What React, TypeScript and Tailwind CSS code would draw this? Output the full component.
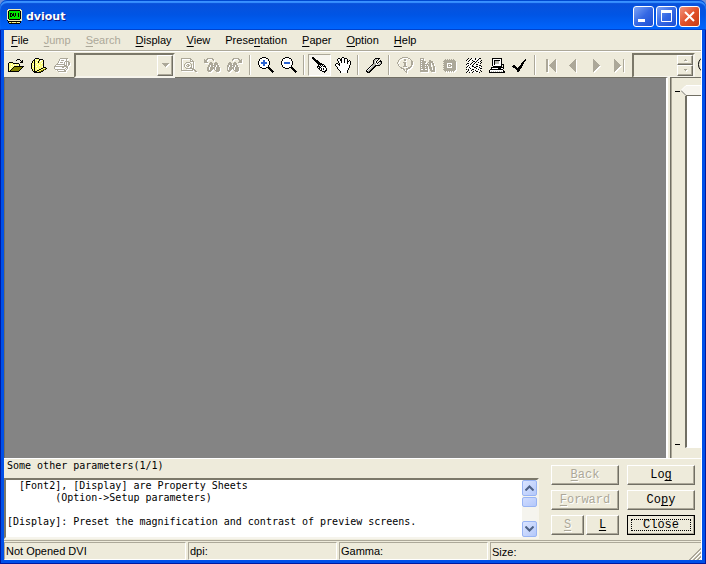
import { clsx } from 'clsx'
import type { ReactNode } from 'react'

const COLORS: Record<string, string> = {
  k: '#000000',
  w: '#ffffff',
  g: '#aca899',
  y: '#ffff7b',
  o: '#848200',
  b: '#2a62d0',
  s: '#b5b5ad',
  c: '#f0ecb4',
  n: '#00e300',
}

// each string is one row of pixels, each letter a key of COLORS
const ICONS = {
  app: [
    '.ccccccccccccc.',
    'cckkkkkkkkkkkcc',
    'cknnnnnnnnnnnkc',
    'cknnnnnnnnnnnkc',
    'cknkknknknnknkc',
    'cknknkknknnknkc',
    'cknknkknknnknkc',
    'cknkknnknnnknkc',
    'cknnnnnnnnnnnkc',
    'cknnnnnnnnnnnkc',
    'cckkkkkkkkkkkcc',
    'kcccccccccccccc',
    '.kkkkkkkkkkkkk.',
    '.kcyocycyocyck.',
    '..kkkkkkkkkkk..',
  ],
  open: [
    '.........kkk....',
    '........k...k.k.',
    '.............kk.',
    '.kkkk.......kkk.',
    'kyyyykkkkkk.....',
    'kyywyyywyyyk....',
    'kyyyywyyyywk....',
    'kyywyykkkkkkkkkk',
    'kyyyykooooooook.',
    'kywykooooooook..',
    'kyykooooooook...',
    'kykooooooook....',
    'kkkkkkkkkkk.....',
  ],
  files: [
    '....kkkk........',
    '...kwyyykkkk....',
    '..kkyywykwwyk...',
    '.kykyyykywyyk...',
    '.kykywykyyywk...',
    'kyykyyyyyywyk...',
    'kywkyywyyyyyk...',
    'kyykyyyywyyyk...',
    'kywkywyyyyywk...',
    'kyykyyyyyyyykkk.',
    'kyykyywyyykkyyok',
    '.kykyyyykkyyook.',
    '.kykyykkyyook...',
    '..kkkkyyookk....',
    '...kkkkkkk......',
  ],
  print: [
    '......gggggggg..',
    '.....gwwwwwwg...',
    '.....gwgggwwg...',
    '....gwwwwwwgggg.',
    '....gwgggwgwgwgg',
    '...gwwwwwwgwgwgg',
    '..gggggggggwgwgg',
    '.gwwwwwwwwgggwg.',
    'gggggggggggggg..',
    'gwwwwwwwggwwgg..',
    'gwwwwwwwwwwgwg..',
    '.ggggggggggwg...',
    '...gwwwwwwgg....',
    '....gggggggg....',
  ],
  preview: [
    'gggggggggg......',
    'g........gg.....',
    'g........g.g....',
    'g........gggg...',
    'g....gggg...g...',
    'g...g....g..g...',
    'g..g..gg..g.g...',
    'g..g.g.gg.g.g...',
    'g..g..gg..g.g...',
    'g...g....gg.g...',
    'g....gggggggg...',
    'g..........ggg..',
    'gggggggggggg.gg.',
    '..............gg',
  ],
  findBack: [
    '...gggggg.......',
    'g.gg....gg......',
    'ggg......g......',
    'ggg.............',
    'gggg..gg...gg...',
    '.....gggg.gggg..',
    '.....gggg.gggg..',
    '....ggwgggggwgg.',
    '....ggwggwggwgg.',
    '...ggwgggggwgggg',
    '...ggwgggggwgggg',
    '...ggwggg.gwgggg',
    '...ggggg...ggggg',
    '....ggg.....ggg.',
  ],
  findNext: [
    '......gggggg....',
    '.....gg....gg.g.',
    '.....g......ggg.',
    '............ggg.',
    '..gg...gg..gggg.',
    '.gggg.gggg......',
    '.gggg.gggg......',
    'ggwgggggwgg.....',
    'ggwggwggwgg.....',
    'gwgggggwgggg....',
    'gwgggggwgggg....',
    'gwggg.gwgggg....',
    'gggg...ggggg....',
    '.gg.....ggg.....',
  ],
  zoomIn: [
    '....kkkk........',
    '..kkwwwwkk......',
    '.kwwwwwwwwk.....',
    '.kwwwbbwwwk.....',
    'kwwwwbbwwwwk....',
    'kwwbbbbbbwwk....',
    'kwwbbbbbbwwk....',
    'kwwwwbbwwwwk....',
    '.kwwwbbwwwk.....',
    '.kwwwwwwwwk.....',
    '..kkwwwwkkkk....',
    '....kkkk..kkk...',
    '...........kkk..',
    '............kkk.',
    '.............kkk',
    '..............k.',
  ],
  zoomOut: [
    '....kkkk........',
    '..kkwwwwkk......',
    '.kwwwwwwwwk.....',
    '.kwwwwwwwwk.....',
    'kwwwwwwwwwwk....',
    'kwwbbbbbbwwk....',
    'kwwbbbbbbwwk....',
    'kwwwwwwwwwwk....',
    '.kwwwwwwwwk.....',
    '.kwwwwwwwwk.....',
    '..kkwwwwkkkk....',
    '....kkkk..kkk...',
    '...........kkk..',
    '............kkk.',
    '.............kkk',
    '..............k.',
  ],
  pointer: [
    'kk..............',
    'kkk.............',
    '.kkk............',
    '..kkkk..........',
    '...kkkk.........',
    '....kkkk........',
    '.....kkkkk......',
    '......kkkkkk....',
    '......kwkwkwk...',
    '.....kkkwkwkkk..',
    '.....kwkkwwwwk..',
    '......kkwkwkwwk.',
    '.......kwkwkwwk.',
    '........kkwwwkk.',
    '..........kkkk..',
    '............k...',
  ],
  hand: [
    '.......kk.......',
    '...kk.kwwkkk....',
    '..kwwkkwwkwwk...',
    '..kwwkkwwkwwk.k.',
    '...kwwkwwkwwkkwk',
    '...kwwkwwkwwkwwk',
    '.kk.kwwwwwwwkwwk',
    'kwwkkwwwwwwwwwwk',
    'kwwwkwwwwwwwwwk.',
    '.kwwwwwwwwwwwwk.',
    '..kwwwwwwwwwwwk.',
    '..kwwwwwwwwwwk..',
    '...kwwwwwwwwwk..',
    '....kwwwwwwwk...',
    '.....kwwwwwwk...',
    '.....kwwwwwwk...',
  ],
  wrench: [
    '.........kkkkk..',
    '........ksswk...',
    '.......ksswk..k.',
    '.......kswk..kkk',
    '.......kswk.kwsk',
    '.......ksswkwssk',
    '......kssswwssk.',
    '.....kssskkkkk..',
    '....kwsskk......',
    '...kwsskk.......',
    '..kwsskk........',
    '.kwsskk.........',
    'kwsskk..........',
    'kkskk...........',
    '.kkk............',
  ],
  info: [
    '.....gggggg.....',
    '...gg......gg...',
    '..g....gg....g..',
    '.g.....gg.....g.',
    '.g............gg',
    'g.....ggg.....gg',
    'g......gg.....gg',
    '.g.....gg.....gg',
    '.g.....gg.....g.',
    '..g...gggg...gg.',
    '...gg......ggg..',
    '....ggg..gggg...',
    '......gg.gg.....',
    '.......g.g......',
    '........gg......',
    '.........g......',
  ],
  fonts: [
    'gggg............',
    'gwwg............',
    'gggg.....gg.....',
    'g.gggg...gggg...',
    'gggggg..ggggg...',
    'g.ggg..g.gg.gg..',
    'ggggggggggg.gg..',
    'g.gggwg.ggg..g..',
    'gggggggg.gg..gg.',
    'g.gggwgg.ggg.gg.',
    'gggggggg.ggg.gg.',
    'gwwggwwg..gg.gg.',
    'gggggggg..ggggg.',
    'gggggggg...gggg.',
  ],
  chip: [
    '..g.g.g.g.g....',
    '.ggggggggggg...',
    'ggggggggggggg..',
    '.gggggggggggg..',
    'ggggwwwwwgggg..',
    '.gggwgggwgggg..',
    'ggggwgwgggggg..',
    '.gggwgggwgggg..',
    'ggggwwwwwgggg..',
    '.gggggggggggg..',
    'ggggggggggggg..',
    '.ggggggggggg...',
    '..g.g.g.g.g....',
  ],
  hatch: [
    '..k..kw.wk.wwkk.',
    '.kw.k.ww.kwwkw..',
    'kw.kwwk.wwwk.w.k',
    '.wkww.wkkwkwwwk.',
    '..w.w.kwwk..kw.k',
    '.kkw.kw.kw.ww.k.',
    'kwwwkwwkwwkkww..',
    '.wkwwwk.ww..wkk.',
    '.kw.w.kkw.kkw.wk',
    'kwwkwwwwkkwwwkw.',
    '.w.wkw.w.wkw.wkk',
    'k.kww.kkw.wwkw.w',
    'w.kwwkw.wkw.wwk.',
    '.kw.ww.kwwkkw..k',
    'kw.kw.kw.w.wwk..',
  ],
  computer: [
    '...kkkkkkkkkk...',
    '...kwwwwwwwwk...',
    '...kwkkkkkkwk...',
    '...kwksssswwk...',
    '...kwksssswwk...',
    '...kwksssswwk...',
    '...kwkwwwwwwkkk.',
    '...kwwwwwwwwk.k.',
    '....kkkkkkkkk.k.',
    '..kkkkkkkkkkkkk.',
    '..kwwwwwwkkkwwk.',
    '.kkkkkkkkkkkkk..',
    'kwwwwwwwwwwwwwk.',
    'kwswswswswswswkk',
    'kkkkkkkkkkkkkkkk',
  ],
  check: [
    '.............k..',
    '............kk..',
    '...........kk...',
    '..........kk....',
    '.........kkk....',
    '.........kk.....',
    '.kk.....kkk.....',
    'kkkk...kkk......',
    '.kkkk.kkkk......',
    '...kkkkkk.......',
    '....kkkk........',
    '.....kkk........',
    '.....kk.........',
  ],
  first: [
    '.gg.......g.',
    '.gg......gg.',
    '.gg.....ggg.',
    '.gg....gggg.',
    '.gg...ggggg.',
    '.gg..gggggg.',
    '.gg.ggggggg.',
    '.gg..gggggg.',
    '.gg...ggggg.',
    '.gg....gggg.',
    '.gg.....ggg.',
    '.gg......gg.',
    '.gg.......g.',
  ],
  prev: [
    '......g...',
    '.....gg...',
    '....ggg...',
    '...gggg...',
    '..ggggg...',
    '.gggggg...',
    'ggggggg...',
    '.gggggg...',
    '..ggggg...',
    '...gggg...',
    '....ggg...',
    '.....gg...',
    '......g...',
  ],
  next: [
    'g.......',
    'gg......',
    'ggg.....',
    'gggg....',
    'ggggg...',
    'gggggg..',
    'ggggggg.',
    'gggggg..',
    'ggggg...',
    'gggg....',
    'ggg.....',
    'gg......',
    'g.......',
  ],
  last: [
    'g........g..',
    'gg.......g..',
    'ggg......g..',
    'gggg.....g..',
    'ggggg....g..',
    'gggggg...g..',
    'ggggggg..g..',
    'gggggg...g..',
    'ggggg....g..',
    'gggg.....g..',
    'ggg......g..',
    'gg.......g..',
    'g........g..',
  ],
  up: ['..g..', '.ggg.'],
  down: ['.ggg.', '..g..'],
  drop: ['ggggggg', '.ggggg.', '..ggg..', '...g...'],
  grip: [
    '...........g',
    '..........gg',
    '.........ggw',
    '........ggw.',
    '.......ggw.g',
    '......ggw.gg',
    '.....ggw.ggw',
    '....ggw.ggw.',
    '...ggw.ggw.g',
    '..ggw.ggw.gg',
    '.ggw.ggw.ggw',
    'ggw.ggw.ggw.',
  ],
}

type IconName = keyof typeof ICONS

interface ToolItem {
  icon: IconName
  label: string
  disabled?: boolean
  pressed?: boolean
}

const MENUS = [
  { label: 'File', key: 0 },
  { label: 'Jump', key: 0, disabled: true },
  { label: 'Search', key: 0, disabled: true },
  { label: 'Display', key: 0 },
  { label: 'View', key: 0 },
  { label: 'Presentation', key: 5 },
  { label: 'Paper', key: 0 },
  { label: 'Option', key: 0 },
  { label: 'Help', key: 0 },
]

const FILE_TOOLS: ToolItem[] = [
  { icon: 'open', label: 'Open' },
  { icon: 'files', label: 'Open files' },
  { icon: 'print', label: 'Print', disabled: true },
]

const TOOL_GROUPS: ToolItem[][] = [
  [
    { icon: 'preview', label: 'Find', disabled: true },
    { icon: 'findBack', label: 'Find previous', disabled: true },
    { icon: 'findNext', label: 'Find next', disabled: true },
  ],
  [
    { icon: 'zoomIn', label: 'Zoom in' },
    { icon: 'zoomOut', label: 'Zoom out' },
  ],
  [
    { icon: 'pointer', label: 'Pointer', pressed: true },
    { icon: 'hand', label: 'Hand' },
  ],
  [{ icon: 'wrench', label: 'Setup' }],
  [
    { icon: 'info', label: 'Information', disabled: true },
    { icon: 'fonts', label: 'Fonts', disabled: true },
    { icon: 'chip', label: 'Memory', disabled: true },
    { icon: 'hatch', label: 'Graphics' },
    { icon: 'computer', label: 'Screen' },
    { icon: 'check', label: 'Check' },
  ],
  [
    { icon: 'first', label: 'First page', disabled: true },
    { icon: 'prev', label: 'Previous page', disabled: true },
    { icon: 'next', label: 'Next page', disabled: true },
    { icon: 'last', label: 'Last page', disabled: true },
  ],
]

const HELP_TEXT = `  [Font2], [Display] are Property Sheets
        (Option->Setup parameters)

[Display]: Preset the magnification and contrast of preview screens.`

const RAISED = 'border border-t-white border-l-white border-r-[#716f64] border-b-[#716f64] shadow-[inset_-1px_-1px_0_#aca899]'
const SUNKEN = 'border-2 border-t-[#7b7869] border-l-[#7b7869] border-r-[#f6f4ec] border-b-[#f6f4ec]'

function PixelIcon({ name, embossed }: { name: IconName; embossed?: boolean }) {
  const rows = ICONS[name]
  const width = rows[0].length
  const pixels = rows.flatMap((row, y) => [...row].map((c, x) => ({ c, x, y }))).filter((p) => p.c !== '.')

  return (
    <svg width={width} height={rows.length} shapeRendering="crispEdges" className="shrink-0 overflow-visible" aria-hidden="true">
      {embossed && pixels.map((p) => <rect key={`s${p.x}-${p.y}`} x={p.x + 1} y={p.y + 1} width="1" height="1" fill="#ffffff" />)}
      {pixels.map((p) => (
        <rect key={`${p.x}-${p.y}`} x={p.x} y={p.y} width="1" height="1" fill={COLORS[p.c]} />
      ))}
    </svg>
  )
}

function Mnemonic({ text, index }: { text: string; index: number }) {
  return (
    <span>
      {text.slice(0, index)}
      <span className="underline underline-offset-2">{text[index]}</span>
      {text.slice(index + 1)}
    </span>
  )
}

function Separator() {
  return <div className="mx-[3px] h-5 w-[2px] shrink-0 border-r border-l border-r-white border-l-[#aca899]" />
}

function ToolButton({ icon, label, disabled, pressed }: ToolItem) {
  return (
    <button
      type="button"
      aria-label={label}
      aria-pressed={pressed}
      disabled={disabled}
      className={clsx(
        'flex h-[22px] w-[23px] shrink-0 items-center justify-center',
        pressed && 'border border-t-[#aca899] border-r-white border-b-white border-l-[#aca899] bg-[#f7f5ee]'
      )}
    >
      <PixelIcon name={icon} embossed={disabled} />
    </button>
  )
}

function CaptionButton({ label, close, children }: { label: string; close?: boolean; children: ReactNode }) {
  return (
    <button
      type="button"
      aria-label={label}
      className={clsx(
        'flex size-[21px] items-center justify-center rounded-[3px] border border-white bg-linear-to-br',
        close ? 'from-[#f0917a] via-[#e2512a] to-[#c83c14]' : 'from-[#7da2f5] via-[#3568e4] to-[#1c4fd4]'
      )}
    >
      <svg width="15" height="15" fill="none" stroke="#ffffff" aria-hidden="true">
        {children}
      </svg>
    </button>
  )
}

function PanelButton({ label, index, disabled, focused }: { label: string; index?: number; disabled?: boolean; focused?: boolean }) {
  return (
    <button
      type="button"
      disabled={disabled}
      className={clsx(
        "relative h-5 flex-1 text-center font-['Liberation_Mono'] text-[12px] leading-4",
        RAISED,
        disabled && 'text-[#aca899] [text-shadow:1px_1px_0_#fff]',
        focused && 'outline outline-black -outline-offset-1'
      )}
    >
      {index === undefined ? label : <Mnemonic text={label} index={index} />}
      {focused && <span className="absolute inset-[3px] border border-dotted border-black" />}
    </button>
  )
}

function TitleBar() {
  return (
    <header className="flex h-[30px] items-center rounded-t-[7px] bg-linear-to-b from-[#0a4fd8] via-[#0055e5] to-[#0066ff] px-[6px] shadow-[inset_0_1px_0_#0048d0,inset_0_3px_1px_#3a92ff,inset_0_-1px_0_#0043cf]">
      <div className="flex flex-1 items-center gap-1 pt-[3px] pl-px">
        <PixelIcon name="app" />
        <h1 className="font-['DejaVu_Sans'] text-[11px] leading-4 font-bold text-white [text-shadow:1px_1px_0_#0a1883]">dviout</h1>
      </div>
      <div className="mt-[3px] flex gap-[2px]">
        <CaptionButton label="Minimize">
          <path d="M2 11.5h7" strokeWidth="3" />
        </CaptionButton>
        <CaptionButton label="Maximize">
          <path d="M2.5 2v10.5h10V2M2 3h11" />
          <path d="M2 2.5h11" strokeWidth="3" />
        </CaptionButton>
        <CaptionButton label="Close window" close>
          <path d="M3 3l9 9M12 3l-9 9" strokeWidth="2" />
        </CaptionButton>
      </div>
    </header>
  )
}

function MenuBar() {
  return (
    <nav className="flex h-5 items-center gap-[15px] pl-[7px]">
      {MENUS.map((menu) => (
        <button key={menu.label} type="button" disabled={menu.disabled} className={clsx('leading-4', menu.disabled && 'text-[#aca899]')}>
          <Mnemonic text={menu.label} index={menu.key} />
        </button>
      ))}
    </nav>
  )
}

function Toolbar() {
  return (
    <div className="flex h-[27px] items-center overflow-hidden border-t border-t-white shadow-[0_-1px_0_#aca899]">
      {FILE_TOOLS.map((tool) => (
        <ToolButton key={tool.icon} {...tool} />
      ))}
      <div className={clsx('relative mr-[2px] ml-px h-[25px] w-[101px] shrink-0', SUNKEN)}>
        <select aria-label="Search text" disabled className="size-full appearance-none" />
        <span className={clsx('pointer-events-none absolute inset-y-0 right-0 flex w-4 items-center justify-center bg-[#eeebdb]', RAISED)}>
          <PixelIcon name="drop" embossed />
        </span>
      </div>
      {TOOL_GROUPS.map((group, i) => (
        <div key={i} className="flex shrink-0 items-center">
          {i > 0 && <Separator />}
          {group.map((tool) => (
            <ToolButton key={tool.icon} {...tool} />
          ))}
        </div>
      ))}
      <div className={clsx('ml-px flex h-[25px] w-[63px] shrink-0', SUNKEN)}>
        <input aria-label="Page" disabled className="w-0 flex-1" />
        <div className="flex w-4 flex-col">
          <button type="button" aria-label="Page up" disabled className={clsx('flex flex-1 items-center justify-center', RAISED)}>
            <PixelIcon name="up" embossed />
          </button>
          <button type="button" aria-label="Page down" disabled className={clsx('flex flex-1 items-center justify-center', RAISED)}>
            <PixelIcon name="down" embossed />
          </button>
        </div>
      </div>
      <svg width="14" height="16" fill="none" stroke="#000000" className="ml-[3px] shrink-0" aria-hidden="true">
        <ellipse cx="6" cy="7.5" rx="5.5" ry="7" />
      </svg>
    </div>
  )
}

function PageSlider() {
  return (
    <aside className="relative ml-[2px] flex w-[31px] overflow-hidden border-t border-l border-t-[#716f64] border-l-[#716f64] shadow-[inset_1px_0_0_#aca899]">
      <div className="flex w-[10px] flex-col items-end justify-between pt-[13px] pb-[13px]">
        <span className="h-px w-[5px] bg-black" />
        <span className="h-px w-[5px] bg-black" />
      </div>
      <div className="flex flex-1 flex-col pt-[7px] pb-[10px] pl-px">
        <svg width="20" height="11" className="shrink-0" aria-hidden="true">
          <path d="M0 5.5L5 .5H20V10.5H5Z" fill="#f7f5ee" stroke="#ffffff" />
          <path d="M0 5.5L5 10.5H20" fill="none" stroke="#716f64" />
        </svg>
        <div className="ml-[4px] flex-1 border-b border-l-2 border-b-white border-l-[#716f64] bg-white" />
      </div>
      <input type="range" aria-label="Page position" defaultValue={0} className="absolute inset-0 size-full opacity-0" />
    </aside>
  )
}

function ScrollBar() {
  const button = 'flex h-4 items-center justify-center rounded-[2px] border border-[#98b4f4] bg-linear-to-br from-[#dbe5ff] to-[#b4c8fa]'
  return (
    <div className="flex w-[15px] flex-col bg-[#f5f4ee]">
      <button type="button" aria-label="Scroll up" className={button}>
        <svg width="9" height="6" fill="none" stroke="#4d6185" strokeWidth="2" aria-hidden="true">
          <path d="M.5 5.5L4.5 1.5L8.5 5.5" />
        </svg>
      </button>
      <div className="flex-1 pt-px">
        <div className="h-[10px] rounded-[2px] border border-[#98b4f4] bg-linear-to-br from-[#d0dcff] to-[#b4c8fa]" />
      </div>
      <button type="button" aria-label="Scroll down" className={button}>
        <svg width="9" height="6" fill="none" stroke="#4d6185" strokeWidth="2" aria-hidden="true">
          <path d="M.5 .5L4.5 4.5L8.5 .5" />
        </svg>
      </button>
    </div>
  )
}

function HelpPanel() {
  return (
    <section className="flex gap-3 border-t border-t-white pr-[6px] pb-px">
      <div className="flex flex-1 flex-col">
        <label htmlFor="help-text" className="pt-px pb-[6px] pl-[3px] font-['DejaVu_Sans_Mono'] text-[10px] leading-3">
          Some other parameters(1/1)
        </label>
        <div className={clsx('flex h-[61px] bg-white', SUNKEN)}>
          <textarea
            id="help-text"
            readOnly
            value={HELP_TEXT}
            className="flex-1 resize-none overflow-hidden pl-px font-['DejaVu_Sans_Mono'] text-[10px] leading-3 whitespace-pre outline-none"
          />
          <ScrollBar />
        </div>
      </div>
      <div className="grid w-[144px] grid-cols-2 content-start gap-x-2 gap-y-[5px] pt-[6px]">
        <div className="flex">
          <PanelButton label="Back" index={0} disabled />
        </div>
        <div className="flex">
          <PanelButton label="Log" index={2} />
        </div>
        <div className="flex">
          <PanelButton label="Forward" index={0} disabled />
        </div>
        <div className="flex">
          <PanelButton label="Copy" index={2} />
        </div>
        <div className="flex gap-[2px]">
          <PanelButton label="S" index={0} disabled />
          <PanelButton label="L" index={0} />
        </div>
        <div className="flex">
          <PanelButton label="Close" focused />
        </div>
      </div>
    </section>
  )
}

function StatusBar() {
  const cell = 'h-[18px] border-t border-t-[#aca899] pl-px leading-4'
  const boxed = 'border border-r-white border-b-white border-l-[#aca899]'
  return (
    <footer className="flex gap-[2px] border-t border-t-[#aca899] pt-px">
      <p className={clsx(cell, boxed, 'w-[182px]')}>Not Opened DVI</p>
      <p className={clsx(cell, boxed, 'w-[149px]')}>dpi:</p>
      <p className={clsx(cell, boxed, 'w-[149px]')}>Gamma:</p>
      <p className={clsx(cell, 'flex flex-1 items-end justify-between border-l border-l-[#aca899]')}>
        Size:
        <PixelIcon name="grip" />
      </p>
    </footer>
  )
}

export default function App() {
  return (
    <div className="flex min-h-screen flex-col overflow-hidden bg-[#6f8fd6] font-['Liberation_Sans'] text-[11px] text-black">
      <TitleBar />
      <div className="flex flex-1 flex-col bg-[#0019a0] px-px pb-px">
        <div className="flex flex-1 flex-col border-3 border-t-0 border-[#0050e8] bg-[#eeebdb]">
          <div className="flex flex-1 flex-col border-r border-r-white">
            <MenuBar />
            <div className="h-px" />
            <Toolbar />
            <main className="-mt-px flex flex-1">
              <div className="flex-1 border-t border-r-2 border-l border-t-[#716f64] border-r-white border-l-[#716f64] bg-[#848484]" />
              <PageSlider />
            </main>
            <HelpPanel />
            <StatusBar />
          </div>
        </div>
      </div>
    </div>
  )
}
